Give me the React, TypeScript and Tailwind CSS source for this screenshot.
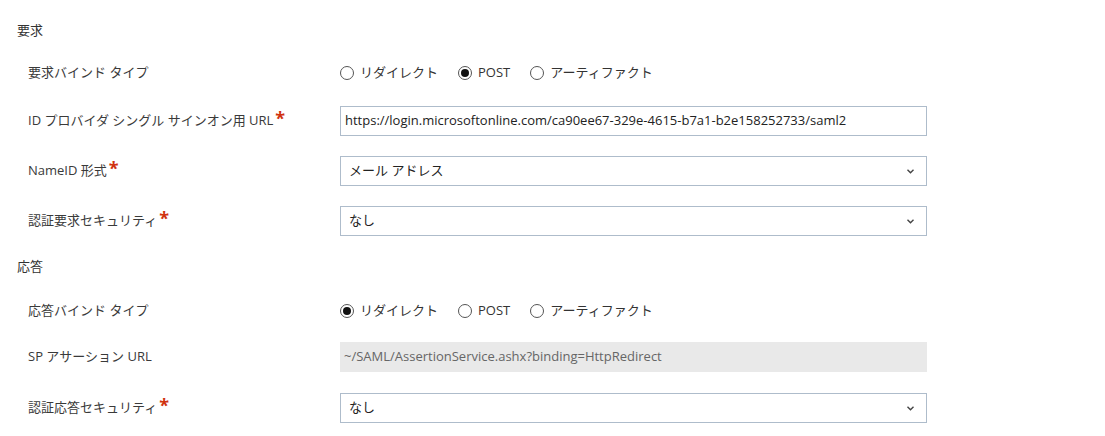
import React from "react";

const font = { fontFamily: '"Open Sans", "Noto Sans CJK JP", sans-serif' };

function Star() {
  return <span className="ml-[2px] text-[18px] leading-none text-[#d0320f] relative top-[-3px] font-bold">*</span>;
}

function Radio({ checked, label }: { checked?: boolean; label: string }) {
  return (
    <span className="flex items-center mr-[20px]">
      <span className="w-[14px] h-[14px] rounded-full border border-[#555] flex items-center justify-center bg-white">
        {checked && <span className="w-[8px] h-[8px] rounded-full bg-[#111]" />}
      </span>
      <span className="ml-[6px]">{label}</span>
    </span>
  );
}

function Chevron() {
  return (
    <svg width="7" height="5" viewBox="0 0 7 5" className="mr-[12px]">
      <path d="M0.5 0.8 L3.5 3.8 L6.5 0.8" fill="none" stroke="#444" strokeWidth="1.4" />
    </svg>
  );
}

function Row({ h, label, star, children }: { h: string; label: string; star?: boolean; children: React.ReactNode }) {
  return (
    <div className={`flex items-center ${h}`}>
      <div className="w-[340px] pl-[28px] flex items-center text-[#3a3a3a]">
        <span>{label}</span>
        {star && <Star />}
      </div>
      <div className="flex-none w-[587px] flex items-center">{children}</div>
    </div>
  );
}

function Select({ value }: { value: string }) {
  return (
    <div className="w-full h-[30px] border border-[#aebccb] bg-white flex items-center justify-between pl-[8px] text-[#222]">
      <span>{value}</span>
      <Chevron />
    </div>
  );
}

export default function App() {
  return (
    <div className="w-[1105px] h-[436px] bg-white text-[13px] text-[#333]" style={font}>
      <div className="h-[15px]" />
      <div className="h-[31px] flex items-center pl-[17px]">要求</div>
      <Row h="h-[50px] pt-[3px]" label="要求バインド タイプ">
        <div className="flex items-center">
          <Radio label="リダイレクト" />
          <Radio checked label="POST" />
          <Radio label="アーティファクト" />
        </div>
      </Row>
      <Row h="h-[50px]" label="ID プロバイダ シングル サインオン用 URL" star>
        <div className="w-full h-[30px] border border-[#aebccb] bg-white flex items-center pl-[4px] text-[#222]">
          https://login.microsoftonline.com/ca90ee67-329e-4615-b7a1-b2e158252733/saml2
        </div>
      </Row>
      <Row h="h-[50px]" label="NameID 形式" star>
        <Select value="メール アドレス" />
      </Row>
      <Row h="h-[50px]" label="認証要求セキュリティ" star>
        <Select value="なし" />
      </Row>
      <div className="h-[42px] flex items-center pl-[17px]">応答</div>
      <Row h="h-[44px] pt-[2px]" label="応答バインド タイプ">
        <div className="flex items-center">
          <Radio checked label="リダイレクト" />
          <Radio label="POST" />
          <Radio label="アーティファクト" />
        </div>
      </Row>
      <Row h="h-[50px]" label="SP アサーション URL">
        <div className="w-full h-[30px] bg-[#e9e9e9] flex items-center pl-[4px] text-[#666]">
          ~/SAML/AssertionService.ashx?binding=HttpRedirect
        </div>
      </Row>
      <Row h="h-[52px]" label="認証応答セキュリティ" star>
        <Select value="なし" />
      </Row>
    </div>
  );
}
